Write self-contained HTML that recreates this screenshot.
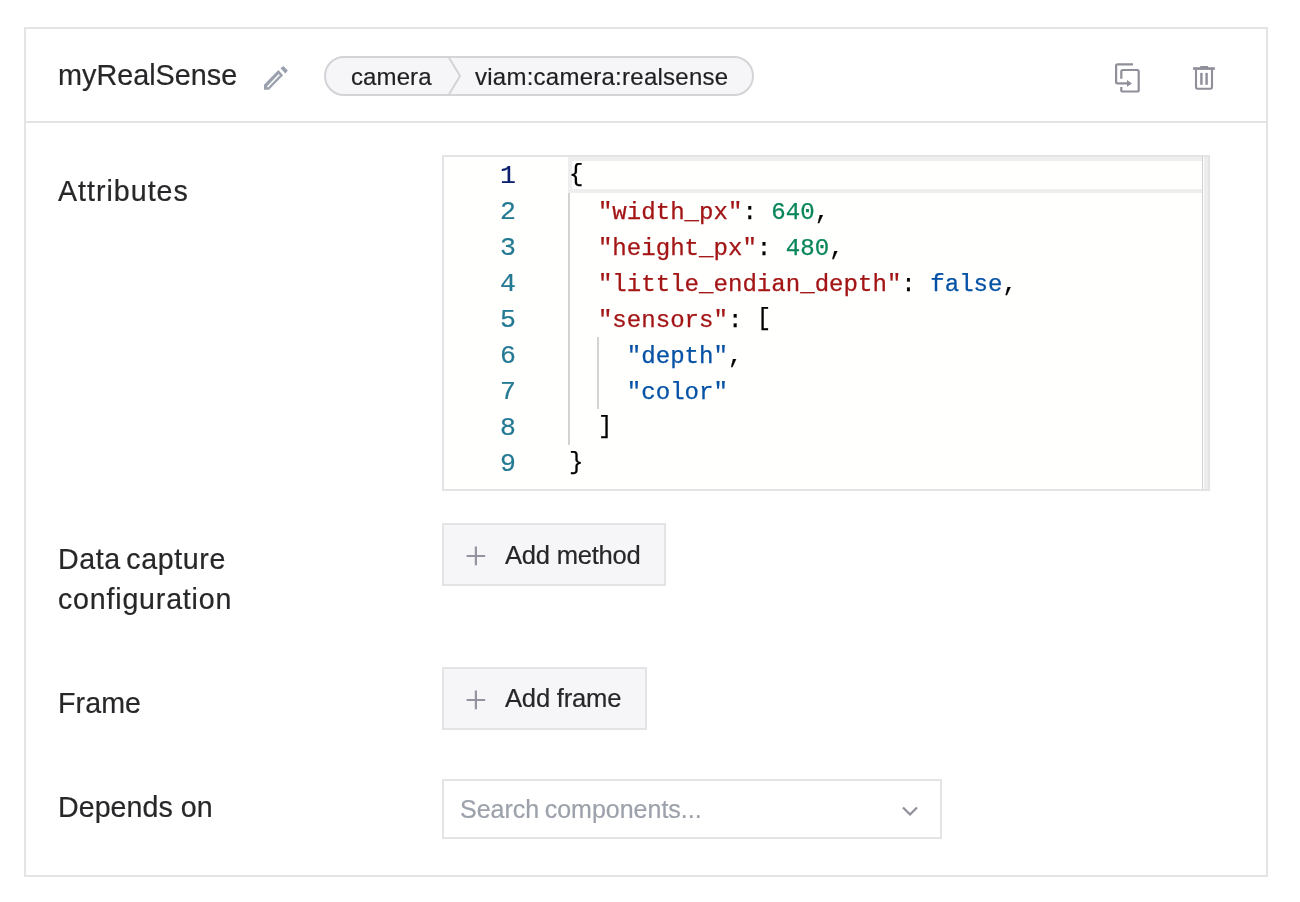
<!DOCTYPE html>
<html><head><meta charset="utf-8">
<style>
*{margin:0;padding:0;box-sizing:border-box}
html,body{width:1300px;height:902px;background:#fff;overflow:hidden;font-family:"Liberation Sans",sans-serif;color:#27272a}
.abs{position:absolute}
.card{position:absolute;left:24px;top:27px;width:1244px;height:850px;border:2px solid #e4e4e7}
.hdiv{position:absolute;left:26px;top:121px;width:1240px;height:2px;background:#e4e4e7}
.t{position:absolute;white-space:nowrap;line-height:40px;will-change:transform;-webkit-text-stroke:0.2px currentColor}
.title{left:58px;top:55px;font-size:28.8px}
.pill{position:absolute;left:324px;top:56px;width:430px;height:40px;border:2px solid #d4d4d8;border-radius:20px;background:#f6f6f8;overflow:hidden}
.pill .t{font-size:24px;line-height:36px;color:#1f1f22}
.label{font-size:28.6px;left:59px}
.editor{position:absolute;left:442px;top:155px;width:768px;height:336px;border:2px solid #e4e4e7;background:#fffffe;overflow:hidden}
.code{position:absolute;will-change:transform;font-family:"Liberation Mono",monospace;font-size:24.08px;line-height:36px;white-space:pre;color:#000;-webkit-text-stroke:0.25px currentColor;margin-top:1.5px}
.ln{position:absolute;will-change:transform;left:0;width:72px;text-align:right;font-family:"Liberation Mono",monospace;font-size:26.5px;line-height:36px;color:#237893;-webkit-text-stroke:0.2px currentColor;margin-top:1px}
.p{position:relative;top:-2px}.k{color:#a31515}.n{color:#098658}.s{color:#0451a5}
.btn{position:absolute;left:442px;height:63px;border:2px solid #e4e4e7;background:#f6f6f8}
.btn .t{font-size:26px}
.select{position:absolute;left:442px;top:779px;width:500px;height:60px;border:2px solid #e4e4e7;background:#fff}
</style></head><body>
<div class="card"></div>
<div class="hdiv"></div>
<div class="t title">myRealSense</div>
<svg class="abs" style="left:258px;top:60px" width="36" height="36" viewBox="258 60 36 36">
<path fill="#9aa1ad" d="M280.5 68.2 L283.3 66 L287.9 70.4 L285.3 73.4 Z"/>
<path fill="#9aa1ad" fill-rule="evenodd" d="M278.4 70 L283.1 75.2 L269 89.7 L264 89.7 L264 84.7 Z M278.8 74.1 L279.8 75.2 L268 87.4 L266.9 86.4 Z"/>
</svg>
<div class="pill">
  <div class="t" style="left:24.5px;top:1px;letter-spacing:0.1px">camera</div>
  <svg class="abs" style="left:118px;top:-2px" width="20" height="40" viewBox="0 0 20 40"><path d="M4 0 L16 20 L4 40" fill="none" stroke="#d4d4d8" stroke-width="2"/></svg>
  <div class="t" style="left:149px;top:1px;letter-spacing:0.25px">viam:camera:realsense</div>
</div>
<svg class="abs" style="left:1108px;top:58px" width="40" height="40" viewBox="1108 58 40 40" fill="none" stroke="#8e8f99" stroke-width="2.2">
<path d="M1133 64.4 H1117.5 Q1116.1 64.4 1116.1 65.8 V82 Q1116.1 83.4 1117.5 83.4 H1128"/>
<path fill="#8e8f99" stroke="none" d="M1127 80 L1132 83.4 L1127 86.8 Z"/>
<path d="M1121.3 78.8 V71.5 Q1121.3 70 1122.8 70 H1137.3 Q1138.7 70 1138.7 71.5 V90 Q1138.7 91.5 1137.3 91.5 H1122.8 Q1121.3 91.5 1121.3 90 V87"/>
</svg>
<svg class="abs" style="left:1184px;top:58px" width="40" height="40" viewBox="1184 58 40 40">
<rect x="1200.2" y="66" width="7.8" height="2" fill="#8e8f99"/>
<rect x="1193.1" y="67.2" width="21.7" height="2.7" fill="#8e8f99"/>
<path d="M1196 69.5 V87 Q1196 88.7 1197.7 88.7 H1210.3 Q1212 88.7 1212 87 V69.5" fill="none" stroke="#8e8f99" stroke-width="2.1"/>
<rect x="1200.2" y="72.9" width="2.4" height="11.9" fill="#8e8f99"/>
<rect x="1205.4" y="72.9" width="2.4" height="11.9" fill="#8e8f99"/>
</svg>

<div class="t label" style="left:58.2px;top:171.1px;letter-spacing:1px">Attributes</div>
<div class="editor">
  <div class="abs" style="left:124px;top:0;width:640px;height:36px;border:4px solid #eeeeee;border-right:none"></div>
  <div class="abs" style="left:124px;top:36px;width:2px;height:252px;background:#d3d3d3"></div>
  <div class="abs" style="left:153px;top:180px;width:2px;height:72px;background:#d3d3d3"></div>
  <div class="abs" style="left:758px;top:0;width:1px;height:332px;background:#cfcfcf"></div>
  <div class="abs" style="left:759px;top:0;width:5px;height:332px;background:#fffffe"></div>
  <div class="abs" style="left:760px;top:0;width:4px;height:332px;background:#ededed"></div>
  <div class="ln" style="top:0;color:#0b216f">1</div>
  <div class="ln" style="top:36px">2</div>
  <div class="ln" style="top:72px">3</div>
  <div class="ln" style="top:108px">4</div>
  <div class="ln" style="top:144px">5</div>
  <div class="ln" style="top:180px">6</div>
  <div class="ln" style="top:216px">7</div>
  <div class="ln" style="top:252px">8</div>
  <div class="ln" style="top:288px">9</div>
  <div class="code" style="left:124.6px;top:0"><span class="p">{</span></div>
  <div class="code" style="left:124.6px;top:36px">  <span class="k">"width_px"</span>: <span class="n">640</span>,</div>
  <div class="code" style="left:124.6px;top:72px">  <span class="k">"height_px"</span>: <span class="n">480</span>,</div>
  <div class="code" style="left:124.6px;top:108px">  <span class="k">"little_endian_depth"</span>: <span class="s">false</span>,</div>
  <div class="code" style="left:124.6px;top:144px">  <span class="k">"sensors"</span>: <span class="p">[</span></div>
  <div class="code" style="left:124.6px;top:180px">    <span class="s">"depth"</span>,</div>
  <div class="code" style="left:124.6px;top:216px">    <span class="s">"color"</span></div>
  <div class="code" style="left:124.6px;top:252px">  <span class="p">]</span></div>
  <div class="code" style="left:124.6px;top:288px"><span class="p">}</span></div>
</div>

<div class="t label" style="left:58px;top:538.6px;letter-spacing:0.6px;word-spacing:-3px">Data capture</div>
<div class="t label" style="left:58.2px;top:578.9px;letter-spacing:0.8px">configuration</div>
<div class="btn" style="top:523px;width:224px">
  <svg class="abs" style="left:20px;top:19px" width="22" height="22"><path d="M2.6 12 H21.2 M11.9 2.6 V21.2" stroke="#93949d" stroke-width="2.2"/></svg>
  <div class="t" style="left:61px;top:9.6px;font-size:25.6px;letter-spacing:-0.25px">Add method</div>
</div>
<div class="t label" style="left:58px;top:683.3px;letter-spacing:0.1px">Frame</div>
<div class="btn" style="top:667px;width:205px">
  <svg class="abs" style="left:20px;top:19px" width="22" height="22"><path d="M2.6 12 H21.2 M11.9 2.6 V21.2" stroke="#93949d" stroke-width="2.2"/></svg>
  <div class="t" style="left:61px;top:9.4px;font-size:25.6px;letter-spacing:-0.2px">Add frame</div>
</div>
<div class="t label" style="left:58px;top:787.3px;letter-spacing:0.05px">Depends on</div>
<div class="select">
  <div class="t" style="left:15.5px;top:8px;font-size:25px;color:#9ca1ab;word-spacing:-1.5px">Search components...</div>
  <svg class="abs" style="left:458px;top:25px" width="18" height="12"><path d="M1 1.5 L8 8.5 L15 1.5" fill="none" stroke="#8e8f99" stroke-width="2.2"/></svg>
</div>
</body></html>
